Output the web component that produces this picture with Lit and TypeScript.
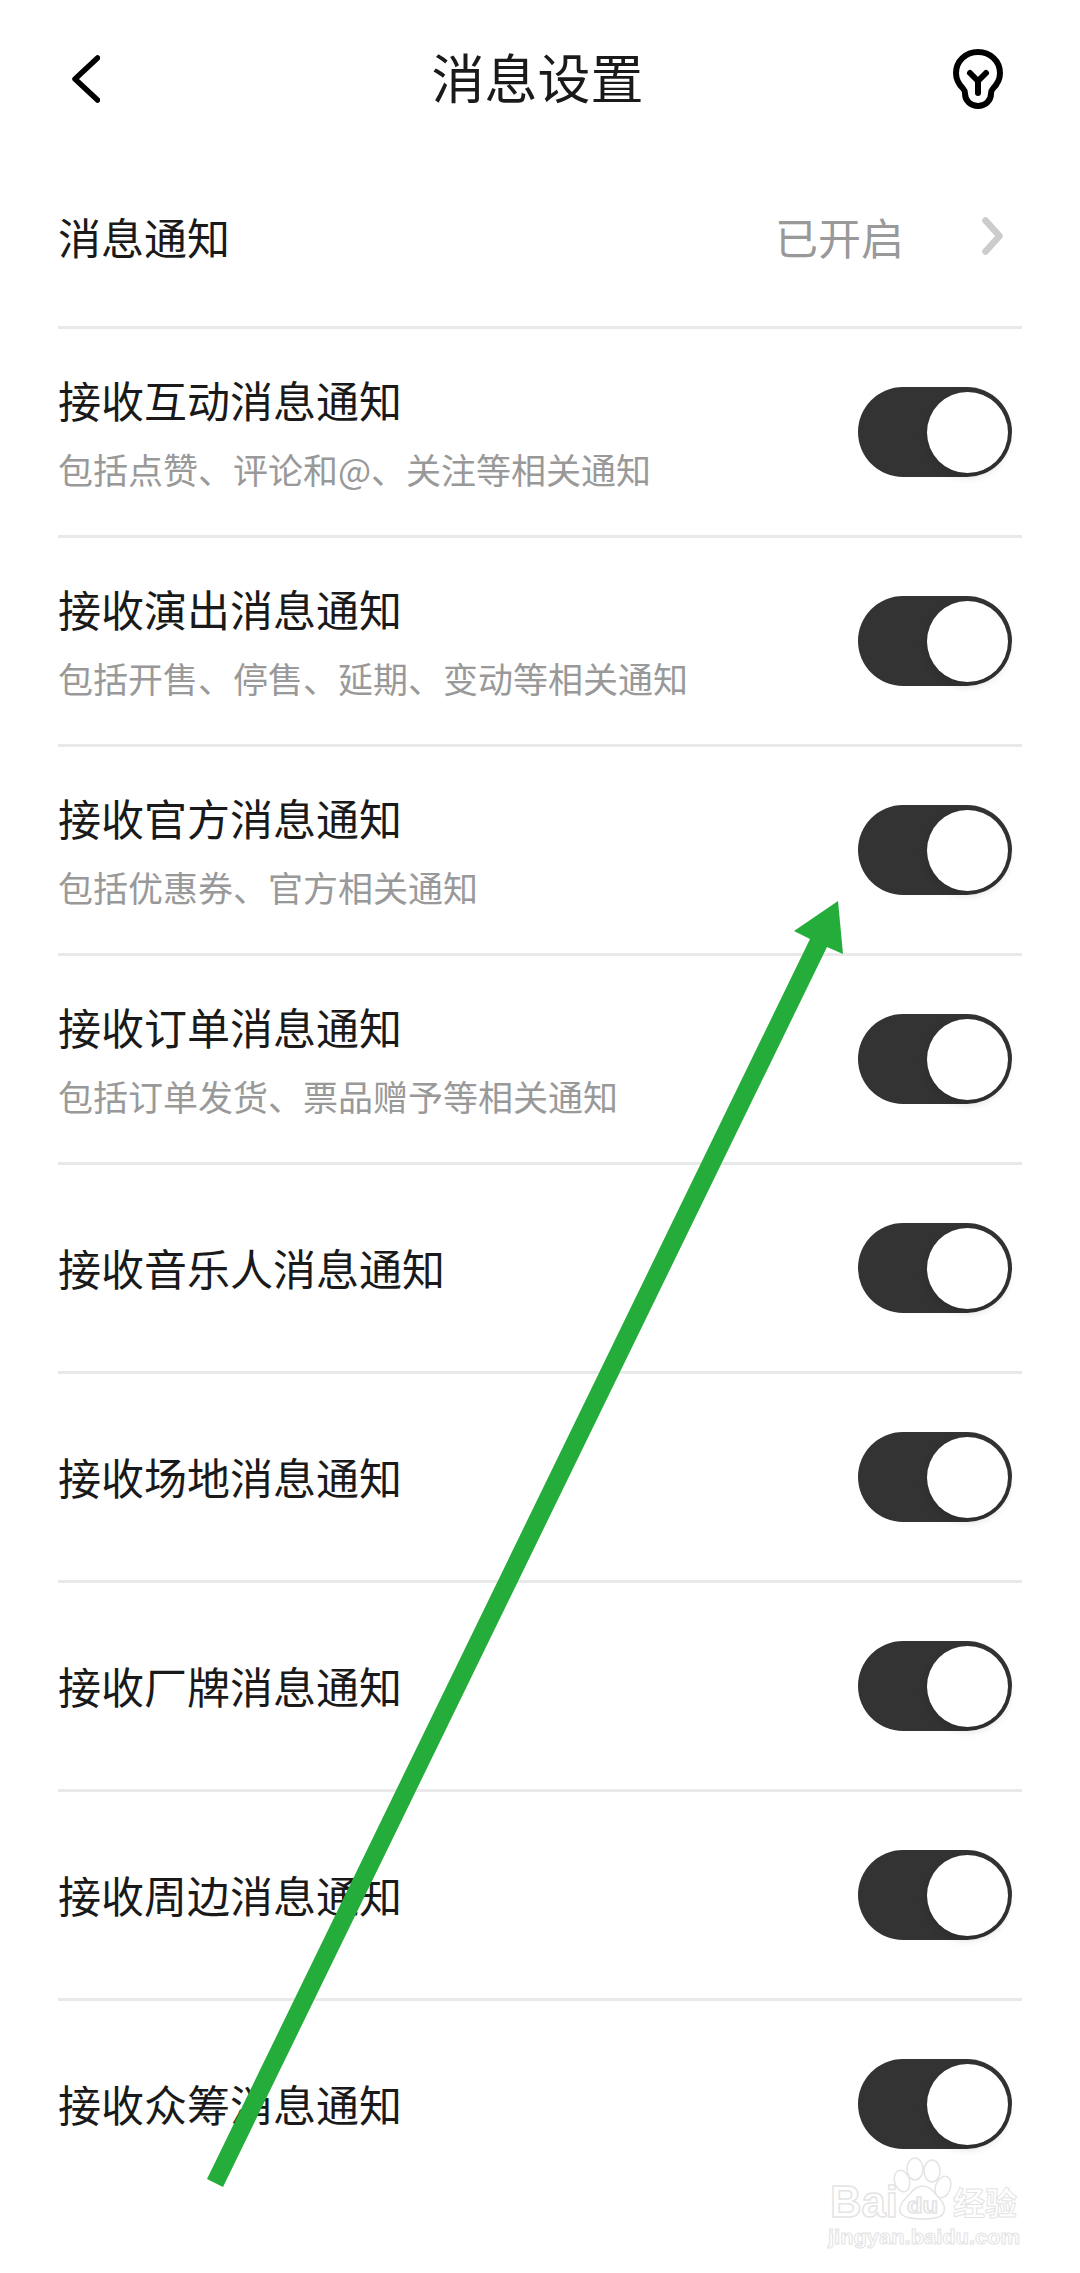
import { LitElement, html, css, svg } from "lit";
import { customElement, property } from "lit/decorators.js";

const rows = [
  { title: "接收互动消息通知", sub: "包括点赞、评论和@、关注等相关通知" },
  { title: "接收演出消息通知", sub: "包括开售、停售、延期、变动等相关通知" },
  { title: "接收官方消息通知", sub: "包括优惠券、官方相关通知" },
  { title: "接收订单消息通知", sub: "包括订单发货、票品赠予等相关通知" },
  { title: "接收音乐人消息通知" },
  { title: "接收场地消息通知" },
  { title: "接收厂牌消息通知" },
  { title: "接收周边消息通知" },
  { title: "接收众筹消息通知" },
];

@customElement("app-switch")
export class AppSwitch extends LitElement {
  static styles = css`
    :host {
      display: block;
      flex: none;
    }
    .track {
      display: flex;
      align-items: center;
      justify-content: flex-end;
      box-sizing: border-box;
      width: 154px;
      height: 90px;
      padding-right: 4px;
      border-radius: 45px;
      background: #333;
    }
    .knob {
      width: 81px;
      height: 81px;
      border-radius: 50%;
      background: #fff;
      box-shadow: 0 4px 9px rgba(0, 0, 0, 0.14);
    }
  `;

  render() {
    return html`<div class="track"><div class="knob"></div></div>`;
  }
}

@customElement("setting-row")
export class SettingRow extends LitElement {
  @property() title = "";
  @property() sub = "";

  static styles = css`
    :host {
      display: flex;
      align-items: center;
      justify-content: space-between;
      box-sizing: border-box;
      height: 209px;
      padding-right: 10px;
      border-bottom: 3px solid #e9e9e9;
    }
    :host(:last-child) {
      border-bottom-color: transparent;
    }
    .text {
      display: flex;
      flex-direction: column;
      gap: 19px;
      padding-bottom: 2px;
    }
    .title {
      font-size: 43px;
      line-height: 55px;
      color: #1a1a1a;
    }
    .sub {
      font-size: 35px;
      line-height: 45px;
      color: #999;
    }
  `;

  render() {
    return html`<div class="text">
        <div class="title">${this.title}</div>
        ${this.sub ? html`<div class="sub">${this.sub}</div>` : ""}
      </div>
      <app-switch></app-switch>`;
  }
}

// arrow and watermark were pasted on top of the screenshot
const overlay = svg`
  <polygon fill="#25ad3c" points="838,901 794,931 810,939 207,2179 223,2187 827,947 843,954" />
  <g fill="#fff" stroke="#e4e4e4" stroke-width="1.5">
    <ellipse cx="902" cy="2181" rx="7.5" ry="11" transform="rotate(-15 902 2181)" />
    <ellipse cx="915" cy="2169" rx="8" ry="11" />
    <ellipse cx="932" cy="2171" rx="8" ry="11" />
    <ellipse cx="943" cy="2187" rx="7.5" ry="11" transform="rotate(20 943 2187)" />
    <path d="M923 2186c8 0 11 7 16 12 6 6 7 11 4 16-3 4-9 5-20 5s-18-1-22-5c-3-5-1-10 5-16 5-5 9-12 17-12z" />
    <g font-family="'Liberation Sans', sans-serif" font-weight="700">
      <text x="830" y="2217" font-size="45" textLength="68" lengthAdjust="spacingAndGlyphs">Bai</text>
      <text x="907" y="2213" font-size="22" textLength="31" lengthAdjust="spacingAndGlyphs">du</text>
      <text x="828" y="2244" font-size="20" stroke-width="1" textLength="192" lengthAdjust="spacingAndGlyphs">jingyan.baidu.com</text>
    </g>
    <text x="953" y="2215" font-family="'Noto Sans CJK SC', sans-serif" font-size="32" font-weight="700" stroke-width="1">经验</text>
  </g>
`;

@customElement("app-root")
export class AppRoot extends LitElement {
  static styles = css`
    :host {
      display: block;
      position: relative;
      width: 1080px;
      height: 2273px;
      overflow: hidden;
      background: #fff;
      font-family: "Noto Sans CJK SC", "Noto Sans", sans-serif;
    }
    .header {
      display: grid;
      grid-template-columns: 1fr auto 1fr;
      align-items: center;
      box-sizing: border-box;
      height: 151px;
      padding: 7px 77px 0 72px;
    }
    .header h1 {
      margin: 0 0 6px;
      font-size: 53px;
      font-weight: 400;
      line-height: 70px;
      color: #1a1a1a;
    }
    .back {
      width: 28px;
      height: 48px;
      fill: none;
      stroke: #000;
      stroke-width: 5.5;
      stroke-linecap: round;
      stroke-linejoin: round;
    }
    .bulb {
      justify-self: end;
      width: 50px;
      height: 60px;
      fill: none;
      stroke: #000;
      stroke-width: 6;
      stroke-linecap: round;
      stroke-linejoin: round;
    }
    .list {
      margin: 0 58px;
    }
    .top {
      display: flex;
      align-items: center;
      justify-content: space-between;
      box-sizing: border-box;
      height: 178px;
      padding: 0 19px 5px 0;
      border-bottom: 3px solid #e9e9e9;
      font-size: 43px;
      color: #1a1a1a;
    }
    .status {
      display: flex;
      align-items: center;
      gap: 78px;
      color: #999;
    }
    .chev {
      width: 21px;
      height: 38px;
      fill: none;
      stroke: #ccc;
      stroke-width: 6.5;
      stroke-linecap: round;
      stroke-linejoin: round;
    }
    .overlay {
      position: absolute;
      inset: 0;
      width: 1080px;
      height: 2273px;
    }
  `;

  render() {
    return html`
      <div class="header">
        <svg class="back" viewBox="0 0 28 48"><path d="M25.5 3 3 24l22.5 21" /></svg>
        <h1>消息设置</h1>
        <svg class="bulb" viewBox="0 0 50 60">
          <path d="M25 3C12.500 3 3 12.500 3 24c0 6.500 3 11.500 7 15.500 1.500 1.500 2 3 2 5C12 51.500 17.500 57 25 57s13-5.500 13-12.500c0-2 .5-3.500 2-5 4-4 7-9 7-15.500C47 12.500 37.500 3 25 3z" />
          <path d="M17 24l8 8 8-8M25 32v12" />
        </svg>
      </div>
      <div class="list">
        <div class="top">
          <span>消息通知</span>
          <span class="status">
            已开启
            <svg class="chev" viewBox="0 0 21 38"><path d="M3.500 3.500 17.500 19 3.500 34.500" /></svg>
          </span>
        </div>
        ${rows.map(
          (r) => html`<setting-row .title=${r.title} .sub=${r.sub ?? ""}></setting-row>`
        )}
      </div>
      <svg class="overlay" viewBox="0 0 1080 2273">${overlay}</svg>
    `;
  }
}
